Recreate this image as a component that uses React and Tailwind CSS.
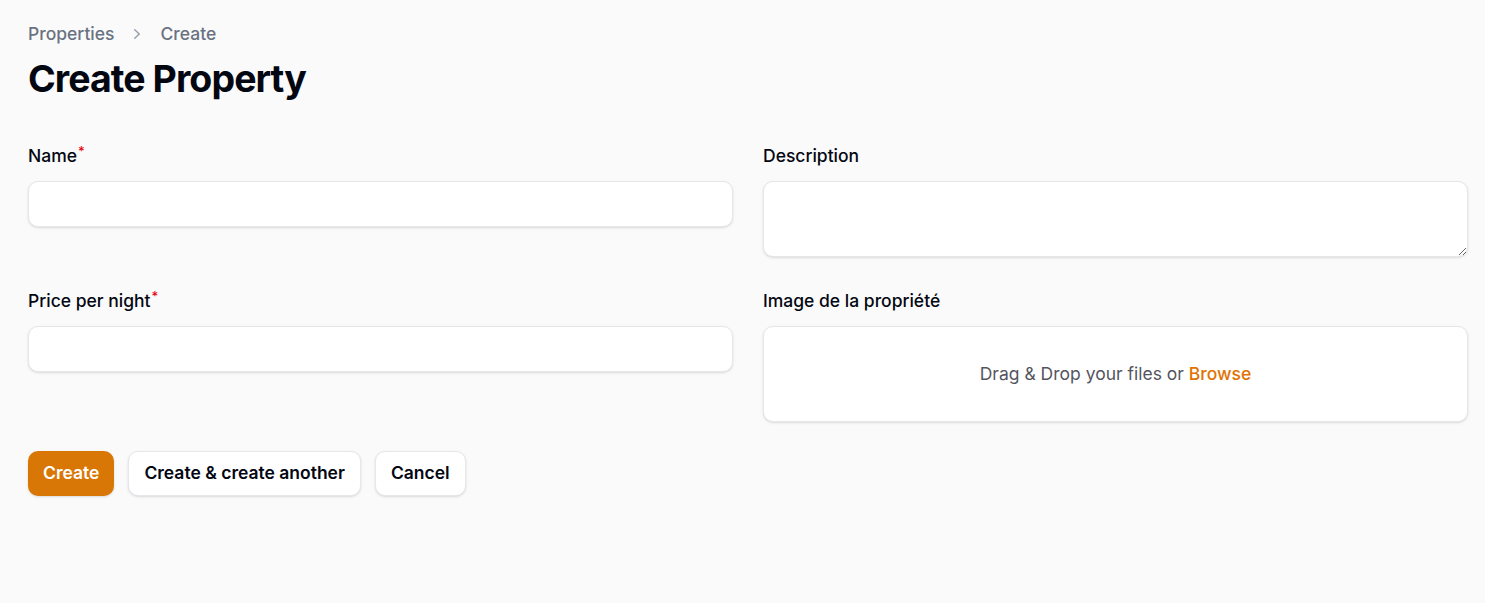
import React from 'react';

const font = { fontFamily: 'Inter, "Noto Sans", sans-serif' };

function Label({ children, required }) {
  return (
    <label className="block text-[17.5px] leading-[25px] font-medium text-gray-950">
      {children}
      {required && <sup className="text-[13px] font-medium text-red-600 ml-[1px]">*</sup>}
    </label>
  );
}

export default function App() {
  return (
    <div style={font} className="min-h-[603px] bg-[#fafafa] pl-[28px] pr-[17px] pt-[21px]">
      <nav className="flex items-center gap-[13px] text-[17.5px] leading-[25px] font-medium text-gray-500">
        <span>Properties</span>
        <svg width="20" height="20" viewBox="0 0 20 20" fill="currentColor" className="text-gray-400">
          <path
            fillRule="evenodd"
            d="M7.21 14.77a.75.75 0 01.02-1.06L11.168 10 7.23 6.29a.75.75 0 111.04-1.08l4.5 4.25a.75.75 0 010 1.08l-4.5 4.25a.75.75 0 01-1.06-.02z"
            clipRule="evenodd"
          />
        </svg>
        <span>Create</span>
      </nav>
      <h1 className="mt-[10px] text-[37.5px] leading-[45px] font-bold tracking-tight text-gray-950">Create Property</h1>

      <form className="mt-[42px] grid grid-cols-2 gap-x-[30px] gap-y-[31px] items-start">
        <div className="space-y-[13px]">
          <Label required>Name</Label>
          <input className="block w-full h-[46px] rounded-[10px] border border-gray-200 bg-white shadow-sm px-3 outline-none" />
        </div>
        <div className="space-y-[13px]">
          <Label>Description</Label>
          <textarea className="block w-full h-[76px] rounded-[10px] border border-gray-200 bg-white shadow-sm px-3 py-2 outline-none" />
        </div>
        <div className="space-y-[13px]">
          <Label required>Price per night</Label>
          <input className="block w-full h-[46px] rounded-[10px] border border-gray-200 bg-white shadow-sm px-3 outline-none" />
        </div>
        <div className="space-y-[13px]">
          <Label>Image de la propriété</Label>
          <div className="flex h-[96px] items-center justify-center rounded-[10px] border border-gray-200 bg-white shadow-sm text-[17.5px] text-[#55555f]">
            <span>
              Drag &amp; Drop your files or <span className="font-medium text-amber-600">Browse</span>
            </span>
          </div>
        </div>
      </form>

      <div className="mt-[29px] flex items-center gap-[14px] text-[17.5px] font-semibold">
        <button className="h-[45px] rounded-[10px] bg-[#d97706] px-[15px] text-white shadow-sm">Create</button>
        <button className="h-[45px] rounded-[10px] border border-gray-200 bg-white px-[15px] text-gray-950 shadow-sm">
          Create &amp; create another
        </button>
        <button className="h-[45px] rounded-[10px] border border-gray-200 bg-white px-[15px] text-gray-950 shadow-sm">
          Cancel
        </button>
      </div>
    </div>
  );
}
